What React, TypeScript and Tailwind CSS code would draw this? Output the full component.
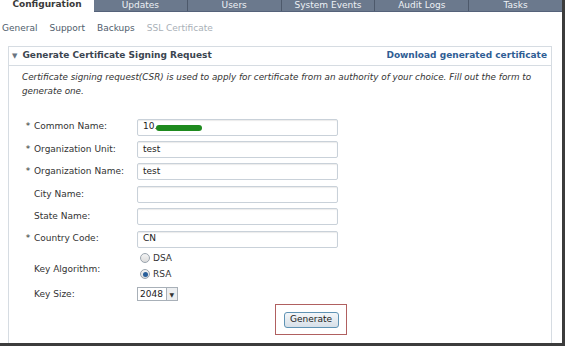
import React from "react"

const TABS = ["Updates", "Users", "System Events", "Audit Logs", "Tasks"]

const FIELDS = [
  { label: "Common Name:", req: true, value: "10." },
  { label: "Organization Unit:", req: true, value: "test" },
  { label: "Organization Name:", req: true, value: "test" },
  { label: "City Name:", req: false, value: "" },
  { label: "State Name:", req: false, value: "" },
  { label: "Country Code:", req: true, value: "CN" },
]

function Label({ text, req }: { text: string; req: boolean }) {
  return (
    <div className="w-[115px] flex text-[#333]">
      <span className="w-[12px] text-center">{req ? "*" : ""}</span>
      <span>{text}</span>
    </div>
  )
}

function Radio({ checked }: { checked?: boolean }) {
  return (
    <span className="w-[10px] h-[10px] rounded-full border border-[#9aa4ae] bg-gradient-to-b from-[#f4f4f4] to-[#dcdcdc] flex items-center justify-center">
      {checked && <span className="w-[5px] h-[5px] rounded-full bg-[#2a5f9a]" />}
    </span>
  )
}

export default function App() {
  return (
    <div className="w-[566px] h-[348px] bg-white overflow-hidden font-['DejaVu_Sans',sans-serif] text-[9px]">
      <div className="w-[565px] h-[346px] border-r-[3px] border-b-[3px] border-[#3c3c3c] flex flex-col">
        {/* top tabs */}
        <div className="flex h-[12px]">
          <div className="w-[94px] text-center font-bold text-[#3a3a3a] leading-[8px] text-[9px]">Configuration</div>
          <div className="flex-1 flex bg-[#6b798d] border-b border-[#55627a]">
            {TABS.map((t, i) => (
              <div
                key={t}
                className={`flex-1 text-center text-[#eef1f5] leading-[11px] ${i > 0 ? "border-l border-[#4d596b]" : ""}`}
              >
                {t}
              </div>
            ))}
          </div>
        </div>

        {/* sub nav */}
        <div className="flex gap-[12px] pl-[2px] mt-[10px] text-[9px] leading-[12px] text-[#4f5d6c]">
          <span>General</span>
          <span>Support</span>
          <span>Backups</span>
          <span className="text-[#a9b0b7]">SSL Certificate</span>
        </div>

        {/* panel */}
        <div className="ml-[8px] mr-[10px] mt-[12px] flex-1 border border-b-0 border-[#d6dce2] flex flex-col">
          <div className="h-[19px] border-b border-[#d6dce2] flex items-center justify-between pl-[3px] pr-[4px]">
            <div className="flex items-center gap-[5px] font-bold text-[#3b4550]">
              <span className="text-[7px] text-[#6a7480]">▼</span>
              <span>Generate Certificate Signing Request</span>
            </div>
            <span className="font-bold text-[#2f5d94]">Download generated certificate</span>
          </div>

          <div className="pl-[13px] pt-[4px] italic text-[#333] leading-[14px] text-[8.8px] whitespace-nowrap">
            Certificate signing request(CSR) is used to apply for certificate from an authority of your choice. Fill out the form to
            <br />
            generate one.
          </div>

          <div className="pl-[13px] mt-[18px] flex flex-col">
            {FIELDS.map((f, i) => (
              <div key={f.label} className="h-[22.4px] flex items-center">
                <Label text={f.label} req={f.req} />
                <div className="w-[201px] h-[17px] border border-[#c9d1d9] rounded-[2px] shadow-[inset_0_1px_1px_rgba(0,0,0,0.08)] flex items-center pl-[5px] text-[#222]">
                  {f.value}
                  {i === 0 && (
                    <span className="w-[46px] h-[6px] rounded-full bg-[#1e8a1e] -ml-[1px] mt-[1px]" />
                  )}
                </div>
              </div>
            ))}

            <div className="h-[34px] flex items-center">
              <div className="mt-[4px]">
                <Label text="Key Algorithm:" req={false} />
              </div>
              <div className="flex flex-col gap-[4px] pl-[3px] text-[#333] -mt-[2px]">
                <div className="h-[12px] flex items-center gap-[3px]"><Radio />DSA</div>
                <div className="h-[12px] flex items-center gap-[3px]"><Radio checked />RSA</div>
              </div>
            </div>

            <div className="h-[20px] flex items-center">
              <Label text="Key Size:" req={false} />
              <div className="flex items-center h-[14px] border border-[#a8b0b8] pl-[2px] text-[#222]">
                <span className="pr-[3px]">2048</span>
                <span className="w-[11px] h-[12px] border-l border-[#a8b0b8] bg-[#eceef0] flex items-center justify-center text-[6px] text-[#333]">▼</span>
              </div>
            </div>

            <div className="flex pl-[253px]">
              <div className="w-[72px] h-[31px] border border-[#b06060] flex items-center justify-center">
                <button className="w-[55px] h-[16px] rounded-[3px] border border-[#5f93b4] bg-gradient-to-b from-[#f3f6f9] to-[#d7e0e8] text-[#222] text-[9px] leading-none">
                  Generate
                </button>
              </div>
            </div>
          </div>
        </div>
      </div>
    </div>
  )
}
